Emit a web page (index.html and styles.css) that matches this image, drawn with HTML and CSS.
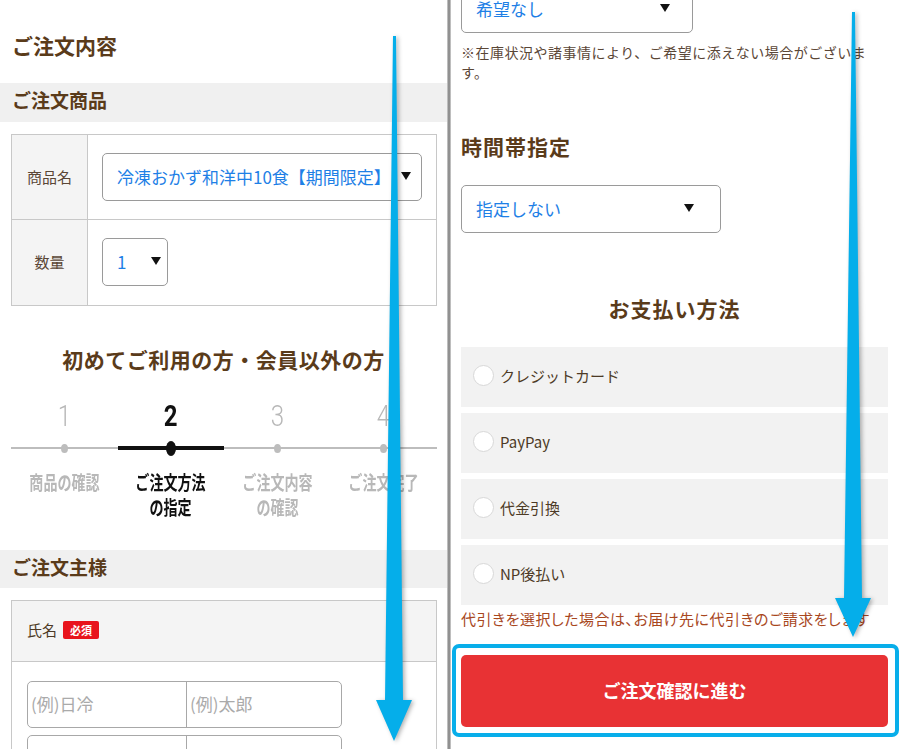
FILE: index.html
```html
<!DOCTYPE html>
<html lang="ja">
<head>
    <meta charset="UTF-8">
    <meta name="viewport" content="width=device-width, initial-scale=1.0">
    <title>ご注文内容</title>
    <link rel="stylesheet" href="styles.css">
</head>
<body>
    <div class="screens">
        <!-- Left screen: order contents -->
        <section class="screen screen-left">
            <h1 class="page-title">ご注文内容</h1>
            <h2 class="band-title">ご注文商品</h2>
            <div class="spec-table">
                <div class="spec-row">
                    <div class="spec-label">商品名</div>
                    <div class="spec-value">
                        <div class="select select-product"><span>冷凍おかず和洋中10食【期間限定】</span><i class="caret"></i></div>
                    </div>
                </div>
                <div class="spec-row">
                    <div class="spec-label">数量</div>
                    <div class="spec-value">
                        <div class="select select-qty"><span>1</span><i class="caret"></i></div>
                    </div>
                </div>
            </div>

            <h2 class="guest-title">初めてご利用の方・会員以外の方</h2>
            <ol class="steps">
                <li class="step"><span class="step-num">1</span><span class="step-track"></span><span class="step-label">商品の確認</span></li>
                <li class="step is-current"><span class="step-num">2</span><span class="step-track"></span><span class="step-label">ご注文方法<br>の指定</span></li>
                <li class="step"><span class="step-num">3</span><span class="step-track"></span><span class="step-label">ご注文内容<br>の確認</span></li>
                <li class="step"><span class="step-num">4</span><span class="step-track"></span><span class="step-label">ご注文完了</span></li>
            </ol>

            <h2 class="band-title band-customer">ご注文主様</h2>
            <div class="spec-table name-table">
                <div class="name-head">氏名 <span class="badge">必須</span></div>
                <div class="name-body">
                    <div class="name-group">
                        <div class="name-cell">(例)日冷</div>
                        <div class="name-cell">(例)太郎</div>
                    </div>
                    <div class="name-group">
                        <div class="name-cell"></div>
                        <div class="name-cell"></div>
                    </div>
                </div>
            </div>
        </section>

        <div class="divider"></div>

        <!-- Right screen: delivery and payment -->
        <section class="screen screen-right">
            <div class="select select-wish"><span>希望なし</span><i class="caret"></i></div>
            <p class="note">※在庫状況や諸事情により、ご希望に添えない場合がございます。</p>

            <h2 class="section-title">時間帯指定</h2>
            <div class="select select-time"><span>指定しない</span><i class="caret"></i></div>

            <h2 class="section-title pay-title">お支払い方法</h2>
            <ul class="pay-list">
                <li class="pay-item"><span class="radio"></span>クレジットカード</li>
                <li class="pay-item"><span class="radio"></span>PayPay</li>
                <li class="pay-item"><span class="radio"></span>代金引換</li>
                <li class="pay-item"><span class="radio"></span>NP後払い</li>
            </ul>
            <p class="cod-note">代引きを選択した場合は、お届け先に代引きのご請求をします</p>

            <div class="submit-frame">
                <button type="button" class="submit-btn">ご注文確認に進む</button>
            </div>
        </section>
    </div>

    <!-- Scroll arrows drawn over both screens -->
    <svg class="scroll-arrows" width="900" height="749" viewBox="0 0 900 749">
        <polygon points="393,36 396,36 403,700 412,700 394,741 376,700 385,700"/>
        <polygon points="852,12 855,12 862,598 871,598 853,637 835,598 844,598"/>
    </svg>
</body>
</html>
```

FILE: styles.css
```css
* {
    margin: 0;
    padding: 0;
    box-sizing: border-box;
}

body {
    font-family: "Noto Sans CJK JP", "Noto Sans", sans-serif;
    color: #4d3a26;
    background: #fff;
    overflow: hidden;
}

.screens {
    display: flex;
    height: 749px;
}

.screen {
    height: 749px;
    overflow: hidden;
}

.screen-left {
    width: 447px;
}

.divider {
    width: 4px;
    background: linear-gradient(to right, #d4d4d4, #8c8c8c 40%, #8c8c8c 60%, #d4d4d4);
}

.screen-right {
    width: 449px;
    padding: 0 12px 0 10px;
}

/* headings */
.page-title {
    font-size: 21px;
    font-weight: 700;
    color: #5a3b1a;
    line-height: 34px;
    padding: 28px 12px 21px;
}

.band-title {
    background: #f0f0f0;
    font-size: 19px;
    font-weight: 700;
    color: #5a3b1a;
    line-height: 34px;
    padding: 0 12px 5px;
}

.band-customer {
    margin-top: 31px;
    line-height: 33px;
}

.guest-title {
    text-align: center;
    font-size: 21px;
    font-weight: 700;
    color: #5a3b1a;
    line-height: 30px;
    letter-spacing: 0.5px;
    margin-top: 38px;
}

.section-title {
    font-size: 21px;
    font-weight: 700;
    color: #5a3b1a;
    line-height: 30px;
    letter-spacing: 1px;
    margin-top: 49px;
}

.pay-title {
    text-align: center;
    margin-top: 60px;
}

/* tables */
.spec-table {
    margin: 12px 10px 0 11px;
    border: 1px solid #c8c8c8;
}

.spec-row {
    display: grid;
    grid-template-columns: 76px 1fr;
}

.spec-row + .spec-row {
    border-top: 1px solid #c8c8c8;
}

.spec-label {
    background: #f4f4f4;
    border-right: 1px solid #c8c8c8;
    display: flex;
    align-items: center;
    justify-content: center;
    padding-bottom: 2px;
    font-size: 15px;
    color: #5a4636;
}

.spec-value {
    padding: 18px 14px;
}

.spec-row + .spec-row .spec-value {
    padding-bottom: 19px;
}

/* fake selects */
.select {
    display: flex;
    align-items: center;
    justify-content: space-between;
    height: 48px;
    border: 1px solid #9a9a9a;
    border-radius: 5px;
    padding: 0 10px 2px 14px;
    color: #1e80e6;
    font-size: 17px;
    background: #fff;
    white-space: nowrap;
}

.caret {
    width: 0;
    height: 0;
    border-left: 5px solid transparent;
    border-right: 5px solid transparent;
    border-top: 8px solid #111;
}

.select-qty {
    width: 66px;
    padding-right: 6px;
}

.select-wish {
    width: 232px;
    padding-right: 22px;
    margin-top: -15px;
}

.select-time {
    width: 260px;
    padding-right: 26px;
    margin-top: 24px;
}

/* step indicator */
.steps {
    list-style: none;
    display: grid;
    grid-template-columns: repeat(4, 1fr);
    margin: 27px 10px 0 11px;
}

.step {
    display: flex;
    flex-direction: column;
    align-items: center;
    color: #b8b8b8;
}

.step-num {
    font-family: Roboto, "Liberation Sans", sans-serif;
    font-size: 30px;
    font-weight: 300;
    line-height: 30px;
    transform: scaleX(0.8);
}

.step-track {
    position: relative;
    width: 100%;
    height: 28px;
    margin-top: 3px;
}

.step-track::before {
    content: "";
    position: absolute;
    left: 0;
    right: 0;
    top: 13px;
    height: 2px;
    background: #bdbdbd;
}

.step-track::after {
    content: "";
    position: absolute;
    left: 50%;
    top: 14px;
    width: 7px;
    height: 9px;
    margin: -4.5px 0 0 -3.5px;
    border-radius: 50%;
    background: #bdbdbd;
}

.step-label {
    font-size: 19px;
    font-weight: 700;
    line-height: 25px;
    margin-top: 7px;
    text-align: center;
    white-space: nowrap;
    transform: scaleX(0.74);
}

.step.is-current {
    color: #111;
}

.step.is-current .step-num {
    font-weight: 700;
}

.step.is-current .step-track::before {
    top: 12px;
    height: 4px;
    background: #111;
}

.step.is-current .step-track::after {
    width: 10px;
    height: 15px;
    margin: -7.5px 0 0 -5px;
    background: #111;
}

/* name fields */
.name-head {
    background: #f4f4f4;
    height: 61px;
    display: flex;
    align-items: center;
    gap: 6px;
    padding: 0 0 3px 15px;
    font-size: 15px;
    color: #4d3a26;
    border-bottom: 1px solid #c8c8c8;
}

.badge {
    background: #e8141c;
    color: #fff;
    font-size: 11px;
    font-weight: 700;
    line-height: 18px;
    padding: 0 7px;
    border-radius: 2px;
}

.name-body {
    padding: 19px 15px;
}

.name-group {
    display: grid;
    grid-template-columns: 158px 1fr;
    width: 315px;
    height: 47px;
    border: 1px solid #a8a8a8;
    border-radius: 5px;
}

.name-group + .name-group {
    margin-top: 7px;
}

.name-cell {
    display: flex;
    align-items: center;
    padding: 0 0 2px 3px;
    color: #aaa;
    font-size: 17px;
}

.name-cell + .name-cell {
    border-left: 1px solid #a8a8a8;
}

/* right screen */
.note {
    font-size: 14px;
    letter-spacing: 0.5px;
    line-height: 20px;
    margin-top: 9px;
    color: #5a4636;
}

.pay-list {
    list-style: none;
    margin-top: 24px;
    display: flex;
    flex-direction: column;
    gap: 6px;
}

.pay-item {
    height: 60px;
    background: #f2f2f2;
    display: flex;
    align-items: center;
    gap: 6px;
    padding: 0 0 3px 12px;
    font-size: 15px;
    color: #4d3a26;
}

.radio {
    width: 21px;
    height: 21px;
    border-radius: 50%;
    background: #fff;
    border: 1px solid #d8d8d8;
}

.cod-note {
    color: #a8471e;
    font-size: 15px;
    line-height: 20px;
    letter-spacing: 0.5px;
    margin-top: 4px;
    white-space: nowrap;
    font-feature-settings: "palt";
}

.submit-frame {
    margin: 15px -11px 0 -9px;
    border: 4px solid #08aeea;
    border-radius: 7px;
    padding: 7px 7px 6px 5px;
}

.submit-btn {
    display: flex;
    align-items: center;
    justify-content: center;
    width: 100%;
    height: 72px;
    padding-bottom: 3px;
    background: #e83234;
    color: #fff;
    border: none;
    border-radius: 5px;
    font-family: inherit;
    font-size: 18px;
    font-weight: 700;
}

.scroll-arrows {
    position: absolute;
    top: 0;
    left: 0;
    pointer-events: none;
    fill: #05aeea;
    filter: drop-shadow(2px 1px 2px rgba(0, 0, 0, 0.3));
}
```
